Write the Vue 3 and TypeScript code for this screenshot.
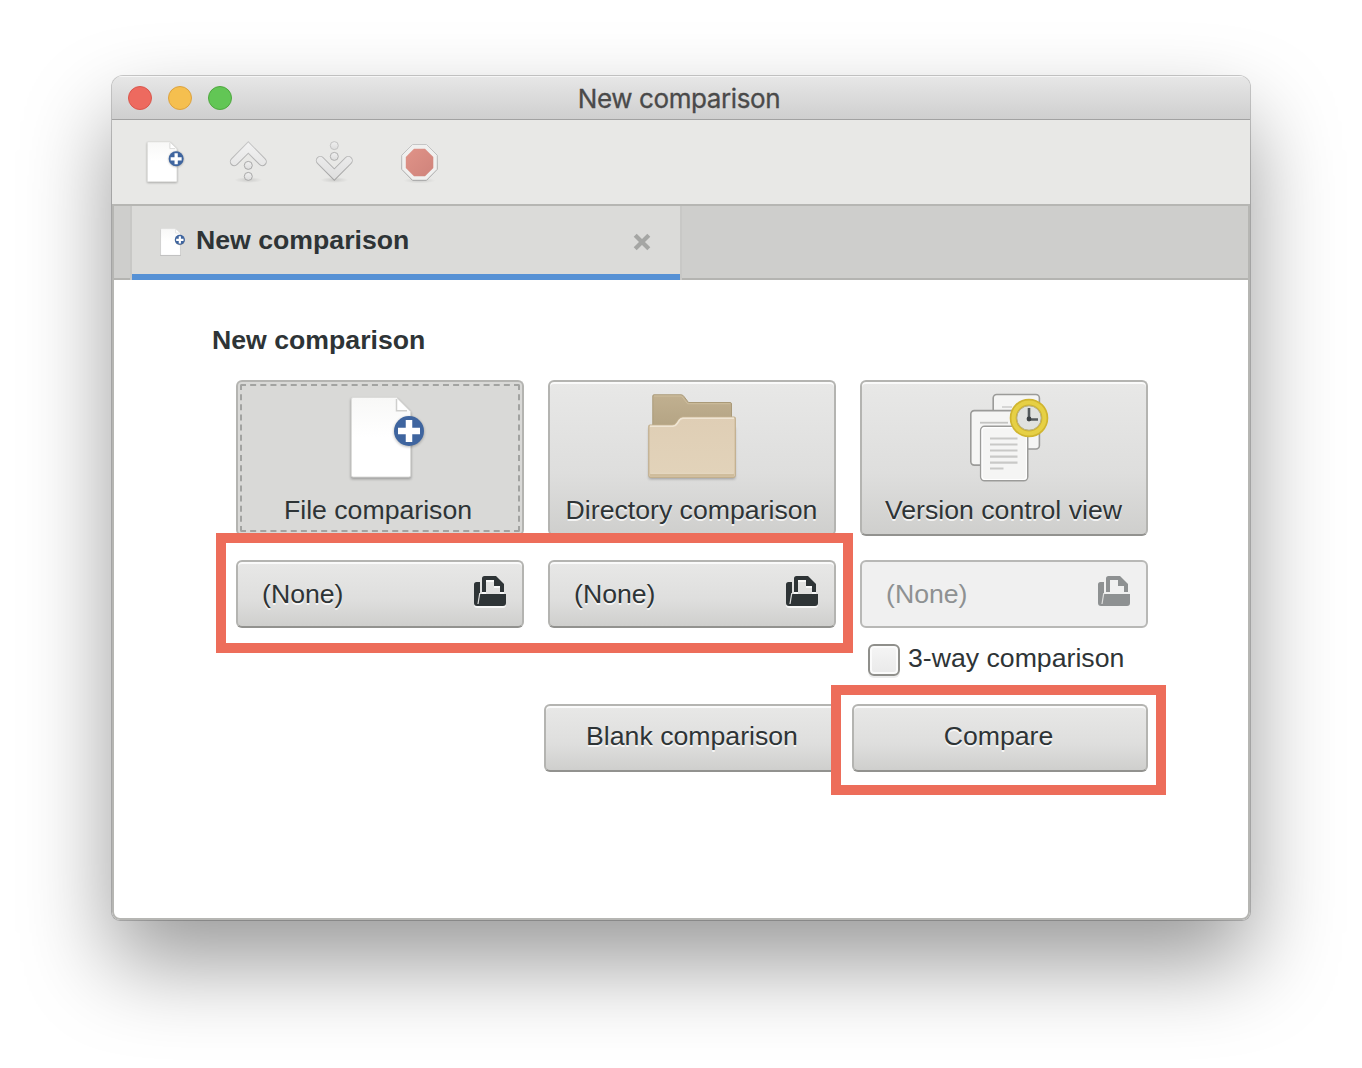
<script setup lang="ts">
import { ref } from 'vue'

interface FileSlot {
  id: number
  label: string
  disabled: boolean
}

const title = 'New comparison'
const threeWay = ref<boolean>(false)
const slots: FileSlot[] = [
  { id: 1, label: '(None)', disabled: false },
  { id: 2, label: '(None)', disabled: false },
  { id: 3, label: '(None)', disabled: true },
]
</script>

<template>
  <div class="desktop">
    <!-- Shared icon artwork -->
    <svg class="defs" width="0" height="0" aria-hidden="true">
      <defs>
        <linearGradient id="metal" x1="0" y1="0" x2="0" y2="1">
          <stop offset="0" stop-color="#f0f0f0" />
          <stop offset="1" stop-color="#dcdcdc" />
        </linearGradient>
        <linearGradient id="rim" gradientUnits="userSpaceOnUse" x1="0" y1="3" x2="0" y2="42">
          <stop offset="0" stop-color="#c9c9c9" />
          <stop offset="1" stop-color="#a3a3a3" />
        </linearGradient>
        <linearGradient id="chevron" gradientUnits="userSpaceOnUse" x1="0" y1="3" x2="0" y2="42">
          <stop offset="0" stop-color="#f3f3f3" />
          <stop offset="1" stop-color="#dedede" />
        </linearGradient>
        <linearGradient id="paper" x1="0" y1="0" x2="0" y2="1">
          <stop offset="0" stop-color="#f8f8f7" />
          <stop offset=".5" stop-color="#ffffff" />
        </linearGradient>
        <linearGradient id="foldBack" x1="0" y1="0" x2="0" y2="1">
          <stop offset="0" stop-color="#c1b090" />
          <stop offset=".55" stop-color="#b5a585" />
        </linearGradient>
        <linearGradient id="foldFront" x1="0" y1="0" x2="0" y2="1">
          <stop offset="0" stop-color="#dfceb5" />
          <stop offset="1" stop-color="#e2d3ba" />
        </linearGradient>
        <linearGradient id="stopRed" x1="0" y1="0" x2="1" y2="1">
          <stop offset="0" stop-color="#e09388" />
          <stop offset="1" stop-color="#cf837b" />
        </linearGradient>
        <radialGradient id="groundShade">
          <stop offset="0" stop-color="#000" stop-opacity=".12" />
          <stop offset="1" stop-color="#000" stop-opacity="0" />
        </radialGradient>
        <filter id="soft" x="-20%" y="-20%" width="140%" height="140%">
          <feGaussianBlur stdDeviation="1.8" />
        </filter>
        <symbol id="page-new" viewBox="0 0 96 96">
          <path d="M19 11H65L79 25V91H19Z" fill="#000" opacity=".32" filter="url(#soft)" />
          <path d="M21 9.500H64.500L78.500 23.500V87.500Q78.500 89 77 89H21Q19.500 89 19.500 87.500V11Q19.500 9.500 21 9.500Z" fill="url(#paper)" stroke="#dcdcda" stroke-width="1" />
          <path d="M64.500 11V22.700H76.500Z" fill="#fff" />
          <path d="M64.500 11V22.700H75" fill="none" stroke="#cfcfcd" stroke-width="1.500" />
          <circle cx="77" cy="44" r="15" fill="#000" opacity=".3" filter="url(#soft)" />
          <circle cx="77" cy="43" r="15" fill="#3f659f" />
          <path d="M77 32V54M66 43H88" stroke="#fff" stroke-width="6.500" />
        </symbol>
        <symbol id="tray" viewBox="0 0 32 32">
          <path d="M2.500 7H6V19H32V28Q32 31 29 31H3Q0 31 0 28V9.500Q0 7 2.500 7Z" />
          <path d="M8 17V3.500Q8 1 10.500 1H22L30 9V17H26V11H20V5H12V17Z" />
          <path class="slit" d="M5.800 18L4 29" fill="none" stroke-width="1.200" />
        </symbol>
      </defs>
    </svg>

    <main class="window">
      <header class="titlebar">
        <div class="lights"><i class="close"></i><i class="min"></i><i class="max"></i></div>
        <span class="window-title">{{ title }}</span>
      </header>

      <nav class="toolbar">
        <svg width="48" height="48" viewBox="0.700 1.500 96 96"><use href="#page-new" width="96" height="96" /></svg>
        <svg width="48" height="48" viewBox="0 0 48 48">
          <ellipse cx="24.300" cy="42" rx="14" ry="3" fill="url(#groundShade)" />
          <path d="M10.300 23.700L24.300 9.500L38.300 23.700" fill="none" stroke="url(#rim)" stroke-width="9" stroke-linecap="round" />
          <path d="M10.300 23.600L24.300 9.500L38.300 23.600" fill="none" stroke="url(#chevron)" stroke-width="7" stroke-linecap="round" />
          <circle cx="24.300" cy="27.400" r="4" fill="url(#metal)" stroke="#a8a8a8" />
          <circle cx="24.300" cy="38.400" r="4" fill="url(#metal)" stroke="#a8a8a8" />
        </svg>
        <svg width="48" height="48" viewBox="0 0 48 48">
          <ellipse cx="24.300" cy="42" rx="14" ry="3" fill="url(#groundShade)" />
          <circle cx="24.300" cy="7.600" r="4" fill="url(#metal)" stroke="#c2c2c2" />
          <path d="M10.300 22.500L24.300 36.600L38.300 22.500" fill="none" stroke="url(#rim)" stroke-width="9" stroke-linecap="round" />
          <path d="M10.300 22.500L24.300 36.500L38.300 22.500" fill="none" stroke="url(#chevron)" stroke-width="7" stroke-linecap="round" />
          <circle cx="24.300" cy="18.400" r="4" fill="url(#metal)" stroke="#b0b0b0" />
        </svg>
        <svg width="48" height="48" viewBox="0 0 48 48">
          <ellipse cx="23.500" cy="42.500" rx="16" ry="3" fill="url(#groundShade)" />
          <path d="M16.500 6.500H30.500L41.300 17.300V31.300L30.500 42.300H16.500L5.700 31.300V17.300Z" fill="#f0f0ef" stroke="url(#rim)" />
          <path d="M18 10.700H29L37.300 19V30L29 38.300H18L9.800 30V19Z" fill="url(#stopRed)" />
        </svg>
      </nav>

      <section class="notebook">
        <div class="tabs">
          <div class="tab">
            <svg width="32" height="32" viewBox="-0.500 1.500 96 96"><use href="#page-new" width="96" height="96" /></svg>
            <span class="tab-label">{{ title }}</span>
            <svg class="tab-close" width="18" height="18" viewBox="0 0 18 18"><path d="M2.200 2.200L15.800 15.800M15.800 2.200L2.200 15.800" stroke="#a5a6a4" stroke-width="4.200" /></svg>
          </div>
        </div>

        <div class="content">
          <h1>{{ title }}</h1>
          <div class="grid">
            <button class="btn kind active">
              <svg width="96" height="96" viewBox="0 0 96 96"><use href="#page-new" width="96" height="96" /></svg>
              <span>File comparison</span>
            </button>
            <button class="btn kind">
              <svg width="96" height="96" viewBox="0 0 96 96">
                <path d="M5 40H91V91H5Z" fill="#000" opacity=".3" filter="url(#soft)" />
                <path d="M10 6.800H37Q39 6.800 40 8.500L44.500 14.500H86Q87.500 14.500 87.500 16V60H8.800V8Q8.800 6.800 10 6.800Z" fill="url(#foldBack)" stroke="#aa9a78" />
                <path d="M10 8H37.500L43.500 15.700H86.500" fill="none" stroke="#cdbd9d" stroke-width="1" />
                <path d="M6 37H28Q31 37 32.500 34.500L34.500 31.500Q36 29 38.500 29H90Q91.300 29 91.300 30.500V87.500Q91.300 89.300 89.500 89.300H6.500Q4.800 89.300 4.800 87.500V38.300Q4.800 37 6 37Z" fill="url(#foldFront)" stroke="#c2af8d" stroke-width="1.200" />
                <path d="M6 38.200H29Q32 37.700 33.500 35L35.500 32Q37 30.300 39 30.200H90" fill="none" stroke="#efe5d3" stroke-width="1.600" />
                <path d="M6 87.300H90" stroke="#cfbd9c" stroke-width="3" />
                <path d="M6.500 85.300H89.500" stroke="#e6d9c2" stroke-width="1" />
              </svg>
              <span>Directory comparison</span>
            </button>
            <button class="btn kind">
              <svg width="96" height="96" viewBox="0 0 96 96" fill="#f5f5f4" stroke="#9b9b99" stroke-width="1.600">
                <rect x="37.200" y="6.500" width="46.200" height="54.500" rx="3.500" />
                <path d="M46 19H56" stroke="#cfcfce" />
                <rect x="14.800" y="22.600" width="47" height="54.500" rx="3.500" />
                <path d="M24 34.700H52" stroke="#c4c4c2" stroke-width="1.800" />
                <rect x="24.700" y="38.300" width="47" height="54.500" rx="4" />
                <rect x="26" y="39.600" width="44.400" height="51.900" rx="3" fill="none" stroke="#fff" stroke-width="1.200" />
                <path d="M34 50.500H61.500M34 56.500H61.500M34 62.500H61.500M34 68.600H61.500M34 74.700H61.500M34 80.500H47.500" stroke="#c9c9c7" stroke-width="2.200" />
                <circle cx="73" cy="30" r="15.700" fill="#e0e2de" stroke="#d0b52f" stroke-width="7.200" />
                <circle cx="73" cy="30" r="15.500" fill="none" stroke="#e6d045" stroke-width="4.200" />
                <circle cx="73" cy="30" r="12.200" fill="none" stroke="#b9b184" stroke-width="1" />
                <path d="M73 20V31.500H82" fill="none" stroke="#555b5c" stroke-width="2.600" />
                <circle cx="73" cy="31" r="2.400" fill="#3c4243" stroke="none" />
              </svg>
              <span>Version control view</span>
            </button>
            <button v-for="s in slots" :key="s.id" class="btn chooser" :disabled="s.disabled">
              <span>{{ s.label }}</span>
              <svg class="tray" width="32" height="32" viewBox="0 0 32 32"><use href="#tray" width="32" height="32" /></svg>
            </button>
          </div>
          <label class="three-way">
            <input v-model="threeWay" type="checkbox" />
            <span>3-way comparison</span>
          </label>
          <div class="actions">
            <button class="btn">Blank comparison</button>
            <button class="btn primary">Compare</button>
          </div>
        </div>
      </section>
    </main>

    <div class="callout files"></div>
    <div class="callout compare"></div>
  </div>
</template>

<style>
body {
  margin: 0;
  background: #fff;
}
</style>

<style scoped>
.desktop {
  position: relative;
  box-sizing: border-box;
  width: 1362px;
  height: 1068px;
  padding: 76px 112px 0;
  overflow: hidden;
  background: #fff;
  color: #2e3436;
  font: 26.67px/30px "Liberation Sans", Arial, sans-serif;
}
.defs {
  position: absolute;
}
svg {
  display: block;
  flex: none;
}
.window {
  width: 1138px;
  height: 844px;
  overflow: hidden;
  border-radius: 11px 11px 8px 8px;
  background: #e8e8e6;
  box-shadow: 0 0 0 1px rgba(0, 0, 0, 0.2), 0 43px 88px rgba(0, 0, 0, 0.4);
}
.titlebar {
  display: grid;
  grid-template-columns: 1fr auto 1fr;
  align-items: center;
  box-sizing: border-box;
  height: 44px;
  padding: 0 20px 0 16px;
  border-bottom: 1px solid #a2a2a2;
  background: linear-gradient(#e7e7e7, #cfcfcf);
  box-shadow: inset 0 2px 0 -1px #f6f6f6;
}
.lights {
  display: flex;
  gap: 16px;
}
.lights i {
  box-sizing: border-box;
  width: 24px;
  height: 24px;
  border: 1px solid #d9574d;
  border-radius: 50%;
  background: #ed6a5f;
}
.lights .min {
  border-color: #dca23f;
  background: #f5bf4f;
}
.lights .max {
  border-color: #4fa73f;
  background: #62c655;
}
.window-title {
  padding-top: 3px;
  color: #4a4a4a;
  font-family: Inter, Roboto, sans-serif;
  font-size: 26px;
  letter-spacing: -0.4px;
  -webkit-text-stroke: 0.3px #4a4a4a;
}
.toolbar {
  display: flex;
  gap: 38px;
  align-items: center;
  height: 84px;
  padding-left: 26px;
}
.notebook {
  display: flex;
  flex-direction: column;
  box-sizing: border-box;
  height: 716px;
  border: 2px solid #b6b6b3;
  border-radius: 0 0 8px 8px;
  background: #fff;
}
.tabs {
  box-sizing: border-box;
  height: 74px;
  padding-left: 16px;
  border-bottom: 2px solid #b4b4b1;
  background: #cececc;
}
.tab {
  display: flex;
  align-items: center;
  box-sizing: border-box;
  width: 552px;
  height: 74px;
  padding: 0 29px 2px 22px;
  border: solid #c8c8c6;
  border-width: 0 2px;
  background: linear-gradient(#5691d5, #5691d5) 0 100% / 100% 6px no-repeat #dbdbd9;
  background-clip: padding-box;
}
.tab-label {
  flex: 1;
  margin-left: 10px;
  padding-bottom: 4px;
  font-weight: bold;
}
.content {
  width: 936px;
  margin-left: 98px;
  padding-top: 45px;
}
h1 {
  margin: 0;
  font-size: inherit;
  line-height: 30px;
}
.grid {
  display: grid;
  grid-template-columns: repeat(3, 288px);
  gap: 24px;
  margin: 25px 0 0 24px;
}
.btn {
  box-sizing: border-box;
  height: 68px;
  margin: 0;
  padding: 0 0 5px;
  border: 2px solid #b4b4b1;
  border-bottom-color: #92928f;
  border-radius: 6px;
  background: linear-gradient(#e8e8e7, #dededd 60%, #cfcfcd);
  box-shadow: inset 0 2px 0 #fafafa;
  color: inherit;
  font: inherit;
  text-shadow: 0 2px 0 rgba(255, 255, 255, 0.77);
}
.kind {
  display: flex;
  flex-direction: column;
  gap: 11px;
  align-items: center;
  height: 156px;
  padding: 6px 0 0;
}
.kind span {
  margin-right: 1px;
}
.active {
  background: #d9d9d7;
  box-shadow: none;
  outline: 2px dashed #a2a3a1;
  outline-offset: -6px;
  text-shadow: none;
}
.active span {
  margin-right: 4px;
}
.chooser {
  display: flex;
  justify-content: space-between;
  align-items: center;
  padding: 0 16px 0 24px;
}
.chooser span {
  padding-bottom: 1px;
}
.tray {
  margin-bottom: 6px;
  fill: #2e3436;
  stroke: none;
  filter: drop-shadow(0 2px 0 rgba(255, 255, 255, 0.77));
}
.slit {
  stroke: #dededd;
}
.chooser:disabled {
  border-color: #b8b8b6;
  background: #f0f0f0;
  box-shadow: none;
  color: #8e9192;
  text-shadow: none;
}
.chooser:disabled .tray {
  fill: #8e9192;
  filter: none;
}
.three-way {
  display: flex;
  gap: 8px;
  align-items: center;
  height: 32px;
  margin: 16px 0 0 656px;
}
.three-way span {
  padding-bottom: 4px;
}
.three-way input {
  appearance: none;
  box-sizing: border-box;
  width: 32px;
  height: 32px;
  margin: 0;
  border: 2px solid #8f8f8b;
  border-radius: 6px;
  background: linear-gradient(#f5f5f5, #e9e9e9);
  box-shadow: inset 0 0 0 2px #fbfbfb, 0 2px 0 #ececec;
}
.actions {
  display: flex;
  gap: 12px;
  justify-content: flex-end;
  margin-top: 28px;
}
.actions .btn {
  width: 296px;
}
.actions .primary {
  padding-right: 3px;
}
/* Highlight frames drawn over the window */
.callout {
  position: absolute;
  box-sizing: border-box;
  border: 10px solid #ed6d5a;
}
.files {
  left: 216px;
  top: 533px;
  width: 637px;
  height: 120px;
}
.compare {
  left: 831px;
  top: 685px;
  width: 335px;
  height: 110px;
}
</style>
